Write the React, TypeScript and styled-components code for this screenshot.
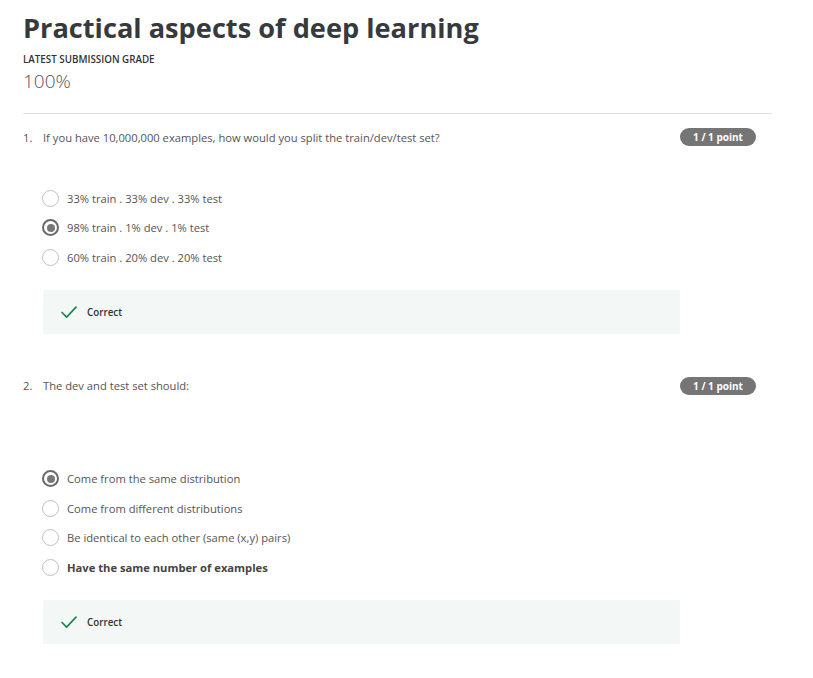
import React from "react";
import styled, { createGlobalStyle } from "styled-components";

const GlobalStyle = createGlobalStyle`
  html, body { margin: 0; padding: 0; background: #ffffff; }
  body { font-family: "Open Sans", "Liberation Sans", sans-serif; color: #444; }
`;

const Page = styled.div`
  width: 749px;
  padding: 10px 0 0 23px;
`;

const Title = styled.h1`
  margin: 0;
  font-size: 27.2px;
  line-height: 36px;
  font-weight: 700;
  color: #373a3c;
`;

const GradeLabel = styled.div`
  margin-top: 7px;
  font-size: 9.8px;
  line-height: 14px;
  font-weight: 600;
  color: #333;
  text-transform: uppercase;
`;

const GradeValue = styled.div`
  margin-top: 2px;
  font-size: 19px;
  line-height: 24px;
  font-weight: 300;
  color: #555;
`;

const Divider = styled.hr`
  margin: 20px 0 0;
  border: none;
  border-top: 1px solid #e1e1e1;
  height: 0;
`;

const Question = styled.section<{ $top: number }>`
  margin-top: ${(p) => p.$top}px;
`;

const Header = styled.div`
  display: flex;
  align-items: center;
  height: 18px;
  padding-right: 16px;
`;

const Num = styled.span`
  width: 20px;
  font-size: 11.2px;
  color: #555;
`;

const Prompt = styled.span`
  font-size: 11.2px;
  color: #555;
`;

const Badge = styled.span`
  margin-left: auto;
  width: 76px;
  height: 18px;
  border-radius: 9px;
  background: #757575;
  color: #fff;
  font-size: 10px;
  font-weight: 700;
  display: flex;
  align-items: center;
  justify-content: center;
`;

const Options = styled.div<{ $top: number }>`
  margin-top: ${(p) => p.$top}px;
  margin-left: 19px;
  display: flex;
  flex-direction: column;
  gap: 12.7px;
`;

const Option = styled.label`
  display: flex;
  align-items: center;
  gap: 8px;
  height: 17px;
`;

const Radio = styled.span<{ $checked?: boolean }>`
  box-sizing: border-box;
  width: 17px;
  height: 17px;
  border-radius: 50%;
  border: ${(p) => (p.$checked ? "2px solid #6a6a6a" : "1.5px solid #c0c0c0")};
  display: flex;
  align-items: center;
  justify-content: center;
  &::after {
    content: "";
    display: ${(p) => (p.$checked ? "block" : "none")};
    width: 8px;
    height: 8px;
    border-radius: 50%;
    background: #777;
  }
`;

const OptionText = styled.span<{ $bold?: boolean }>`
  font-size: 11.2px;
  color: ${(p) => (p.$bold ? "#444" : "#555")};
  font-weight: ${(p) => (p.$bold ? 700 : 400)};
`;

const Feedback = styled.div<{ $top: number }>`
  margin-top: ${(p) => p.$top}px;
  margin-left: 20px;
  width: 637px;
  height: 44px;
  background: #f3f8f6;
  display: flex;
  align-items: center;
  padding-left: 18px;
  box-sizing: border-box;
  gap: 10px;
`;

const FeedbackText = styled.span`
  font-size: 9.8px;
  font-weight: 600;
  color: #333;
`;

const Check = () => (
  <svg width="16" height="13" viewBox="0 0 16 13" fill="none">
    <path d="M1 6.5 L5.6 11.2 L15 1.2" stroke="#1f8354" strokeWidth="1.7" strokeLinecap="round" strokeLinejoin="round" />
  </svg>
);

type Q = {
  n: number;
  prompt: string;
  top: number;
  optTop: number;
  fbTop: number;
  options: { text: string; checked?: boolean; bold?: boolean }[];
};

const questions: Q[] = [
  {
    n: 1,
    prompt: "If you have 10,000,000 examples, how would you split the train/dev/test set?",
    top: 14,
    optTop: 43.5,
    fbTop: 24.3,
    options: [
      { text: "33% train . 33% dev . 33% test" },
      { text: "98% train . 1% dev . 1% test", checked: true },
      { text: "60% train . 20% dev . 20% test" },
    ],
  },
  {
    n: 2,
    prompt: "The dev and test set should:",
    top: 42.4,
    optTop: 75.5,
    fbTop: 24,
    options: [
      { text: "Come from the same distribution", checked: true },
      { text: "Come from different distributions" },
      { text: "Be identical to each other (same (x,y) pairs)" },
      { text: "Have the same number of examples", bold: true },
    ],
  },
];

export default function App() {
  return (
    <>
      <GlobalStyle />
      <Page>
        <Title>Practical aspects of deep learning</Title>
        <GradeLabel>Latest Submission Grade</GradeLabel>
        <GradeValue>100%</GradeValue>
        <Divider />
        {questions.map((q) => (
          <Question key={q.n} $top={q.top}>
            <Header>
              <Num>{q.n}.</Num>
              <Prompt>{q.prompt}</Prompt>
              <Badge>1 / 1 point</Badge>
            </Header>
            <Options $top={q.optTop}>
              {q.options.map((o) => (
                <Option key={o.text}>
                  <Radio $checked={o.checked} />
                  <OptionText $bold={o.bold}>{o.text}</OptionText>
                </Option>
              ))}
            </Options>
            <Feedback $top={q.fbTop}>
              <Check />
              <FeedbackText>Correct</FeedbackText>
            </Feedback>
          </Question>
        ))}
      </Page>
    </>
  );
}
